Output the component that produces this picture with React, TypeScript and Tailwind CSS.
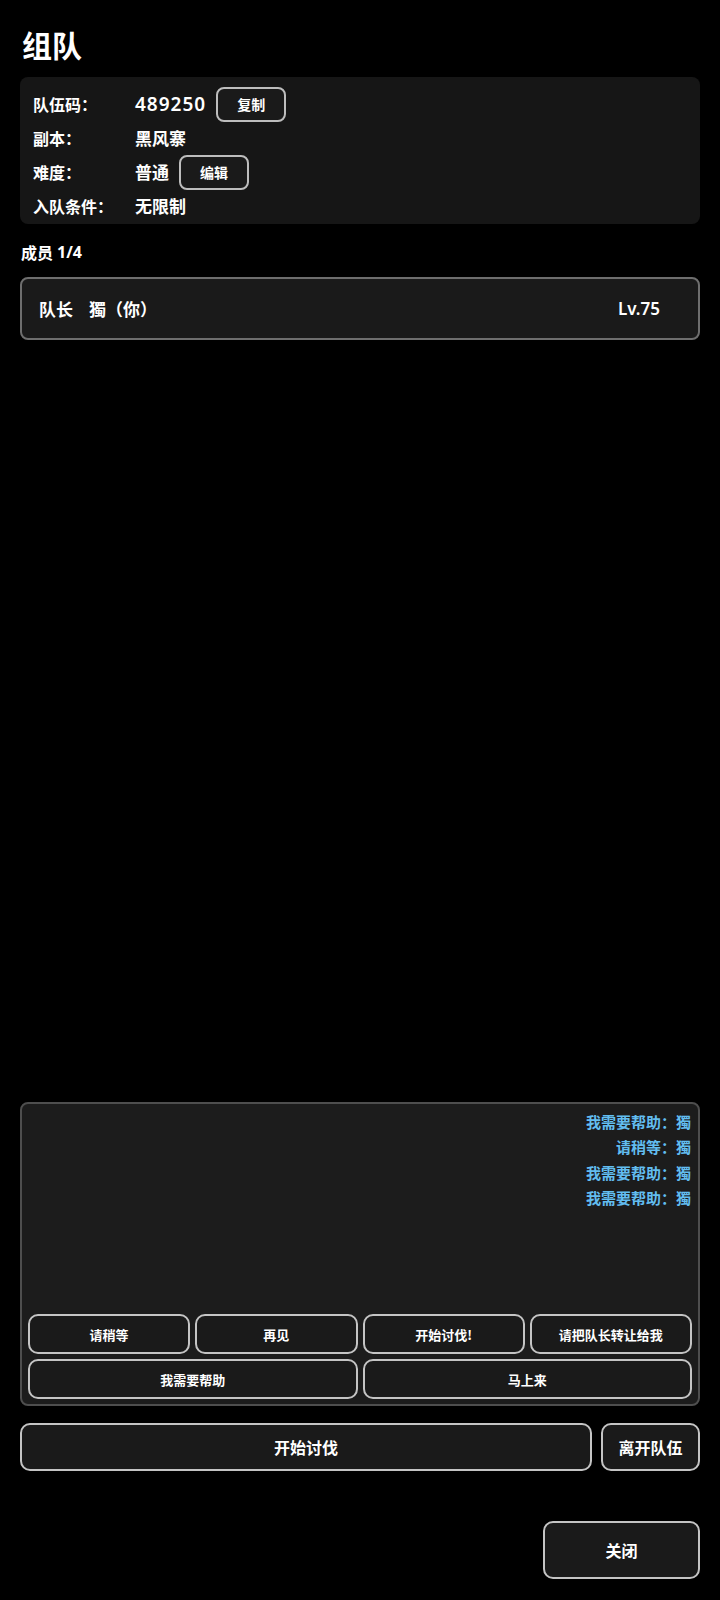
import React from "react";

const cjk = { fontFamily: '"Noto Sans CJK SC", "Noto Sans", sans-serif' };
const latin = { fontFamily: '"Noto Sans", "Noto Sans CJK SC", sans-serif' };

function SmallBtn({ children }: { children: React.ReactNode }) {
  return (
    <button className="h-[35px] px-[19px] ml-[10px] rounded-[8px] border-2 border-[#bdbdbd] bg-[#1a1a1a] text-white text-[14px] font-bold leading-none">
      {children}
    </button>
  );
}

function QuickBtn({ children }: { children: React.ReactNode }) {
  return (
    <button className="h-[40px] rounded-[10px] border-2 border-[#c4c4c4] bg-[#1a1a1a] text-white text-[13px] font-bold leading-none">
      {children}
    </button>
  );
}

export default function App() {
  const messages = ["我需要帮助：獨", "请稍等：獨", "我需要帮助：獨", "我需要帮助：獨"];
  return (
    <div className="h-[1600px] w-[720px] bg-black text-white flex flex-col px-[20px] pt-[24px] pb-[21px]" style={cjk}>
      <div className="h-[40px] flex items-center text-[30px] font-bold leading-none pl-[2px]">组队</div>

      <div className="mt-[13px] rounded-[8px] bg-[#161616] pt-[10px] pb-[1px] pl-[13px]">
        <div className="h-[34px] flex items-center">
          <div className="w-[102px] text-[16px] font-bold">队伍码：</div>
          <div className="text-[19px] font-semibold tracking-[1px]" style={latin}>489250</div>
          <SmallBtn>复制</SmallBtn>
        </div>
        <div className="h-[34px] flex items-center">
          <div className="w-[102px] text-[16px] font-bold">副本：</div>
          <div className="text-[17px] font-bold">黑风寨</div>
        </div>
        <div className="h-[34px] flex items-center">
          <div className="w-[102px] text-[16px] font-bold">难度：</div>
          <div className="text-[17px] font-bold">普通</div>
          <SmallBtn>编辑</SmallBtn>
        </div>
        <div className="h-[34px] flex items-center">
          <div className="w-[102px] text-[16px] font-bold">入队条件：</div>
          <div className="text-[17px] font-bold">无限制</div>
        </div>
      </div>

      <div className="mt-[16px] h-[24px] flex items-center text-[16px] font-bold pl-[1px]">
        成员 <span className="ml-[4px]" style={latin}>1/4</span>
      </div>

      <div className="flex-1 mt-[13px]">
        <div className="h-[63px] rounded-[8px] border-2 border-[#6e6e6e] bg-[#1a1a1a] flex items-center pl-[17px] pr-[38px]">
          <span className="text-[17px] font-bold">队长</span>
          <span className="ml-[16px] text-[17px] font-bold">獨（你）</span>
          <span className="ml-auto text-[17px] font-semibold" style={latin}>Lv.75</span>
        </div>
      </div>

      <div className="h-[304px] rounded-[8px] border-2 border-[#4e4e4e] bg-[#1c1c1c] flex flex-col px-[6px] pb-[5px]">
        <div className="flex-1 pt-[5px] pr-[1px] flex flex-col items-end">
          {messages.map((m, i) => (
            <div key={i} className="h-[25.6px] flex items-center text-[15px] font-bold text-[#62bdf0]">
              {m}
            </div>
          ))}
        </div>
        <div className="grid grid-cols-4 gap-[5px]">
          <QuickBtn>请稍等</QuickBtn>
          <QuickBtn>再见</QuickBtn>
          <QuickBtn>开始讨伐!</QuickBtn>
          <QuickBtn>请把队长转让给我</QuickBtn>
        </div>
        <div className="grid grid-cols-2 gap-[5px] mt-[5px]">
          <QuickBtn>我需要帮助</QuickBtn>
          <QuickBtn>马上来</QuickBtn>
        </div>
      </div>

      <div className="mt-[17px] flex gap-[9px]">
        <button className="flex-1 h-[48px] rounded-[10px] border-2 border-[#c4c4c4] bg-[#1a1a1a] text-white text-[16px] font-bold leading-none">
          开始讨伐
        </button>
        <button className="w-[99px] h-[48px] rounded-[10px] border-2 border-[#c4c4c4] bg-[#1a1a1a] text-white text-[16px] font-bold leading-none">
          离开队伍
        </button>
      </div>

      <div className="mt-[50px] flex justify-end">
        <button className="w-[157px] h-[58px] rounded-[10px] border-2 border-[#c4c4c4] bg-[#1a1a1a] text-white text-[16px] font-bold leading-none">
          关闭
        </button>
      </div>
    </div>
  );
}
